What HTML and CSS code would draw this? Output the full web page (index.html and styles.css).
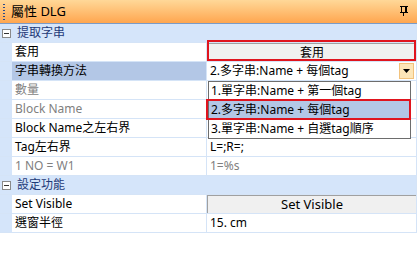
FILE: index.html
```html
<!DOCTYPE html>
<html>
<head>
<meta charset="utf-8">
<link rel="stylesheet" href="styles.css">
</head>
<body>
<div class="panel">
  <div class="titlebar">
    <span class="grip"></span>
    <span class="title">屬性 DLG</span>
    <svg class="pin" width="10" height="10" viewBox="0 0 10 10">
      <rect x="1" y="0" width="8" height="1" fill="#000"/>
      <rect x="2" y="1" width="1" height="5" fill="#000"/>
      <rect x="6" y="1" width="2" height="5" fill="#000"/>
      <rect x="1" y="6" width="8" height="1" fill="#000"/>
      <rect x="4" y="7" width="1" height="3" fill="#000"/>
    </svg>
  </div>
  <div class="grid">
    <div class="cat"><span class="toggle"></span><span class="cat-label">提取字串</span></div>
    <div class="row"><div class="margin"></div><div class="name">套用</div><div class="val"><div class="btn">套用</div></div></div>
    <div class="row"><div class="margin"></div><div class="name sel">字串轉換方法</div><div class="val combo"><span>2.多字串:Name + 每個tag</span><span class="drop"><svg width="7" height="4" viewBox="0 0 7 4"><path d="M0 0h7L3.5 4z" fill="#000"/></svg></span></div></div>
    <div class="row"><div class="margin"></div><div class="name dim">數量</div><div class="val"></div></div>
    <div class="row"><div class="margin"></div><div class="name dim">Block Name</div><div class="val"></div></div>
    <div class="row"><div class="margin"></div><div class="name">Block Name之左右界</div><div class="val"></div></div>
    <div class="row"><div class="margin"></div><div class="name">Tag左右界</div><div class="val">L=;R=;</div></div>
    <div class="row"><div class="margin"></div><div class="name dim">1 NO = W1</div><div class="val dim">1=%s</div></div>
    <div class="cat"><span class="toggle"></span><span class="cat-label">設定功能</span></div>
    <div class="row"><div class="margin"></div><div class="name">Set Visible</div><div class="val"><div class="btn btn2">Set Visible</div></div></div>
    <div class="row"><div class="margin"></div><div class="name">選窗半徑</div><div class="val">15. cm</div></div>

    <div class="list">
      <div class="item">1.單字串:Name + 第一個tag</div>
      <div class="item cur">2.多字串:Name + 每個tag</div>
      <div class="item">3.單字串:Name + 自選tag順序</div>
    </div>
    <div class="mark mark-btn"></div>
    <div class="mark mark-item"></div>
  </div>
</div>
</body>
</html>
```
FILE: styles.css
```css
html, body {
  margin: 0;
  padding: 0;
  background: #fff;
}
.panel {
  width: 417px;
  height: 260px;
  font-family: "Noto Sans", "Noto Sans CJK TC", sans-serif;
  font-size: 12px;
  color: #000;
}
.titlebar {
  height: 23px;
  border-bottom: 1px solid #7b9bc6;
  background: linear-gradient(#ffd898, #ffa64f);
  display: flex;
  align-items: center;
  position: relative;
}
.grip {
  width: 2px;
  height: 16px;
  margin-left: 3px;
  background: repeating-linear-gradient(#2a4a8a 0 1px, transparent 1px 3px);
}
.title {
  margin-left: 6px;
  font-size: 13px;
  font-family: "Noto Sans", "Noto Sans CJK TC", sans-serif;
  line-height: 23px;
}
.pin {
  margin-left: auto;
  margin-right: 8px;
  margin-top: -2px;
}
.grid {
  position: relative;
  width: 416px;
  border-right: 1px solid #d5e4f7;
}
.cat {
  height: 18px;
  border-bottom: 1px solid #d5e4f7;
  background: #d5e5fa;
  display: flex;
  align-items: center;
}
.toggle {
  width: 7px;
  height: 7px;
  border: 1px solid #8a8a8a;
  background: #fff;
  margin-left: 2px;
  position: relative;
}
.toggle::after {
  content: "";
  position: absolute;
  left: 1px;
  top: 3px;
  width: 5px;
  height: 1px;
  background: #333;
}
.cat-label {
  margin-left: 6px;
  color: #1f3a78;
  line-height: 18px;
}
.row {
  display: grid;
  grid-template-columns: 12px 195px 1fr;
  height: 18px;
  border-bottom: 1px solid #d5e4f7;
}
.margin {
  background: #d5e5fa;
}
.name {
  padding-left: 3px;
  line-height: 18px;
  border-right: 1px solid #d5e4f7;
  white-space: nowrap;
  overflow: hidden;
}
.name.sel {
  background: #b3c7e6;
}
.dim {
  color: #7f7f7f;
}
.val {
  padding-left: 3px;
  line-height: 18px;
  white-space: nowrap;
  position: relative;
}
.val:has(.btn) {
  padding-left: 0;
}
.btn {
  height: 17px;
  margin-top: 0;
  background: #f0f0f0;
  border-top: 1px solid #a0a0a0;
  border-left: 1px solid #a0a0a0;
  text-align: center;
  line-height: 17px;
  font-size: 12px;
}
.btn2 {
  font-size: 13px;
}
.combo {
  display: flex;
  align-items: center;
}
.drop {
  margin-left: auto;
  margin-right: 2px;
  width: 13px;
  height: 14px;
  background: #fde6b8;
  border: 1px solid #f2c27c;
  display: flex;
  align-items: center;
  justify-content: center;
}
.list {
  position: absolute;
  top: 57px;
  left: 208px;
  width: 201px;
  border: 1px solid #6d6d6d;
  background: #fff;
}
.item {
  height: 18px;
  line-height: 18px;
  padding-left: 2px;
  border-bottom: 1px solid transparent;
  white-space: nowrap;
}
.item:last-child {
  border-bottom: 0;
}
.item.cur {
  background: #b3c7e6;
}
.mark {
  position: absolute;
  border: 2px solid #e0141e;
  box-sizing: border-box;
}
.mark-btn {
  top: 16px;
  left: 207px;
  width: 209px;
  height: 21px;
}
.mark-btn {
  top: 16px;
}
.mark-item {
  top: 75px;
  left: 206px;
  width: 205px;
  height: 21px;
}
```
